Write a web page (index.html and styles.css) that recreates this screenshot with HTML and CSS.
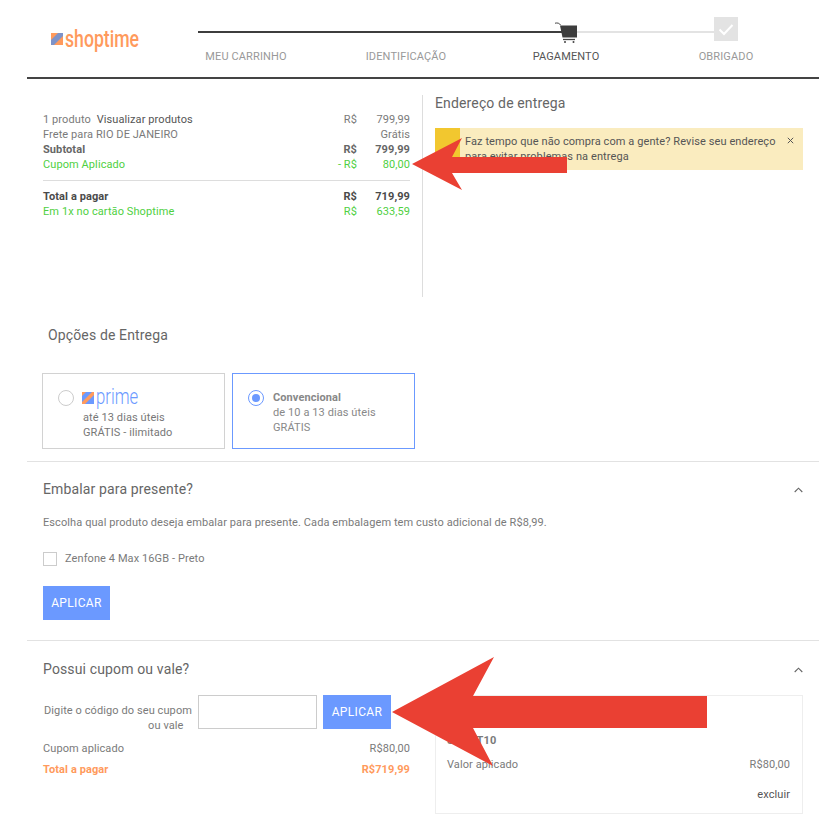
FILE: index.html
```html
<!DOCTYPE html>
<html lang="pt-BR">
<head>
<meta charset="utf-8">
<title>Shoptime - Pagamento</title>
<link rel="stylesheet" href="styles.css">
</head>
<body>
<div class="page">
  <header class="header">
    <div class="logo">
      <svg class="mark" viewBox="0 0 12 12" width="12" height="12"><rect width="12" height="12" fill="#ff9a5c"/><path d="M0 12V7L7 0h5v3L3 12z" fill="#7d93c9"/></svg>
      <span class="logo-text">shoptime</span>
    </div>
    <div class="stepper">
      <div class="track"><span class="track-done"></span><span class="track-todo"></span></div>
      <svg class="cart" viewBox="0 0 24 21" width="24" height="21"><path d="M1 1.2c2.500-.6 4.500 0 5.500 1.800" fill="none" stroke="#444" stroke-width="1"/><path d="M6 3.500h17v12H8.500z" fill="#3d3d3d"/><path d="M9 17.500h12" stroke="#444" stroke-width="1.300"/><circle cx="11" cy="20" r="1" fill="#444"/><circle cx="19.500" cy="20" r="1" fill="#444"/></svg>
      <div class="check"><svg viewBox="0 0 24 24" width="24" height="24"><path d="M5.500 12.500 10 17l8.500-9" fill="none" stroke="#fff" stroke-width="2"/></svg></div>
      <ol class="steps">
        <li>MEU CARRINHO</li>
        <li>IDENTIFICAÇÃO</li>
        <li class="current">PAGAMENTO</li>
        <li>OBRIGADO</li>
      </ol>
    </div>
  </header>

  <div class="summary-row">
    <section class="summary">
      <div class="line"><span class="label">1 produto <a class="view">Visualizar produtos</a></span><span class="cur">R$</span><span class="val">799,99</span></div>
      <div class="line"><span class="label">Frete para RIO DE JANEIRO</span><span class="val">Grátis</span></div>
      <div class="line strong"><span class="label">Subtotal</span><span class="cur">R$</span><span class="val">799,99</span></div>
      <div class="line green"><span class="label">Cupom Aplicado</span><span class="cur">- R$</span><span class="val">80,00</span></div>
      <hr class="rule">
      <div class="line strong dark"><span class="label">Total a pagar</span><span class="cur">R$</span><span class="val">719,99</span></div>
      <div class="line green"><span class="label">Em 1x no cartão Shoptime</span><span class="cur">R$</span><span class="val">633,59</span></div>
    </section>
    <section class="address">
      <h2 class="title">Endereço de entrega</h2>
      <div class="alert">
        <span class="alert-flag"></span>
        <p class="alert-text">Faz tempo que não compra com a gente? Revise seu endereço para evitar problemas na entrega</p>
        <svg class="alert-close" viewBox="0 0 7 7" width="7" height="7"><path d="M.8.800l5.400 5.400M6.200.800.800 6.200" stroke="#555" stroke-width="1"/></svg>
      </div>
    </section>
  </div>

  <section class="delivery">
    <h2 class="title delivery-title">Opções de Entrega</h2>
    <div class="cards">
      <div class="card">
        <span class="radio"></span>
        <div class="card-body prime-body">
          <div class="prime">
            <svg class="mark" viewBox="0 0 12 12" width="12" height="12"><rect width="12" height="12" fill="#6b99ff"/><path d="M0 0h4L0 4zM0 12v-2L10 0h2v3L3 12z" fill="#ff9a5c"/></svg>
            <span class="prime-text">prime</span>
          </div>
          <div>até 13 dias úteis</div>
          <div>GRÁTIS - ilimitado</div>
        </div>
      </div>
      <div class="card selected">
        <span class="radio on"></span>
        <div class="card-body">
          <div class="card-name">Convencional</div>
          <div>de 10 a 13 dias úteis</div>
          <div>GRÁTIS</div>
        </div>
      </div>
    </div>
  </section>

  <section class="panel gift">
    <div class="panel-head">
      <h2 class="title">Embalar para presente?</h2>
      <svg class="chevron" viewBox="0 0 9 6" width="9" height="6"><path d="M.7 5 4.500 1.200 8.300 5" fill="none" stroke="#666" stroke-width="1.100"/></svg>
    </div>
    <p class="gift-note">Escolha qual produto deseja embalar para presente. Cada embalagem tem custo adicional de R$8,99.</p>
    <label class="gift-item"><span class="checkbox"></span>Zenfone 4 Max 16GB - Preto</label>
    <button class="btn" type="button">APLICAR</button>
  </section>

  <section class="panel coupon">
    <div class="panel-head">
      <h2 class="title">Possui cupom ou vale?</h2>
      <svg class="chevron" viewBox="0 0 9 6" width="9" height="6"><path d="M.7 5 4.500 1.200 8.300 5" fill="none" stroke="#666" stroke-width="1.100"/></svg>
    </div>
    <div class="coupon-body">
      <div class="coupon-left">
        <div class="coupon-form">
          <label class="coupon-label">Digite o código do seu cupom<br>ou vale&nbsp;&nbsp;&nbsp;</label>
          <span class="coupon-input"></span>
          <button class="btn" type="button">APLICAR</button>
        </div>
        <div class="coupon-line"><span>Cupom aplicado</span><span>R$80,00</span></div>
        <div class="coupon-line total"><span>Total a pagar</span><span>R$719,99</span></div>
      </div>
      <div class="coupon-box">
        <div class="coupon-code">SHOPT10</div>
        <div class="coupon-line box-line"><span>Valor aplicado</span><span>R$80,00</span></div>
        <a class="remove">excluir</a>
      </div>
    </div>
  </section>
</div>

<svg class="arrow arrow-top" viewBox="0 0 156 52" width="156" height="52"><path d="M0 26 50 0 40 19H155V35H40L50 52z" fill="#ea4033"/></svg>
<svg class="arrow arrow-bottom" viewBox="0 0 316 110" width="316" height="110"><path d="M0 55 102 0 81 39H315V71H81L101 109z" fill="#ea4033"/></svg>
</body>
</html>
```

FILE: styles.css
```css
* { box-sizing: border-box; }
html, body { margin: 0; padding: 0; background: #fff; }
body {
  position: relative;
  height: 834px;
  overflow: hidden;
  font-family: Roboto, "Liberation Sans", sans-serif;
  font-size: 11px;
  line-height: 15px;
  letter-spacing: .09px;
  color: #7a7a7a;
}
.page { width: 792px; margin-left: 27px; }
.title { margin: 0; font-size: 14px; line-height: 17px; font-weight: 400; letter-spacing: .14px; color: #666; }

/* header */
.header { display: flex; height: 79px; border-bottom: 2px solid #444; }
.logo { width: 139px; padding: 28px 0 0 24px; display: flex; align-items: flex-start; }
.logo .mark { margin-top: 5px; flex: none; }
.logo-text {
  display: block;
  margin-left: 2px;
  font-size: 24px;
  line-height: 22px;
  font-weight: 500;
  letter-spacing: 0;
  color: #ff9a5c;
  transform: scaleX(.735);
  transform-origin: left top;
}
.stepper { position: relative; width: 640px; padding-top: 31px; }
.track { display: flex; margin-left: 32px; width: 540px; height: 2px; }
.track-done { width: 374px; background: #3d3d3d; }
.track-todo { flex: 1; background: #e3e3e3; }
.cart { position: absolute; left: 388px; top: 22px; }
.check { position: absolute; left: 548px; top: 17px; width: 24px; height: 24px; background: #e3e3e3; }
.check svg { display: block; }
.steps { display: flex; margin: 17px 0 0; padding: 0; list-style: none; color: #999; line-height: 14px; letter-spacing: .13px; }
.steps li { width: 160px; text-align: center; }
.steps .current { color: #555; }

/* summary */
.summary-row { display: flex; height: 202px; margin-top: 16px; }
.summary { width: 396px; padding: 17px 12px 0 16px; border-right: 1px solid #ddd; }
.line { display: flex; }
.label { flex: 1; }
.cur { text-align: right; }
.val { width: 53px; text-align: right; }
.view { color: #555; margin-left: 3px; }
.strong { font-weight: 700; color: #666; }
.strong.dark { color: #4a4a4a; }
.green { color: #4fd03f; }
.rule { height: 1px; margin: 8px 0 8px; border: 0; background: #ddd; }
.address { flex: 1; padding: 0 16px 0 12px; }
.alert { display: flex; height: 42px; margin-top: 16px; background: #faecbf; color: #555; }
.alert-flag { width: 25px; background: #f2c72f; flex: none; }
.alert-text { width: 320px; margin: 6px 0 0 5px; }
.alert-close { margin: 9px 0 0 2px; }

/* delivery */
.delivery { padding-left: 21px; margin-top: 30px; }
.delivery-title { margin-bottom: 29px; }
.cards { display: flex; gap: 7px; margin-left: -6px; }
.card { display: flex; width: 183px; height: 76px; border: 1px solid #d2d2d2; color: #888; }
.card.selected { border-color: #6b99ff; }
.radio { flex: none; width: 16px; height: 16px; margin: 16px 0 0 15px; border: 1px solid #ccc; border-radius: 50%; }
.radio.on { position: relative; border-color: #6b99ff; }
.radio.on::after { content: ""; position: absolute; left: 3px; top: 3px; width: 8px; height: 8px; border-radius: 50%; background: #6b99ff; }
.card-body { margin-left: 9px; padding-top: 16px; }
.card-name { font-weight: 700; }
.prime-body { padding-top: 14px; color: #777; }
.prime { display: flex; align-items: flex-start; height: 22px; margin-left: -1px; }
.prime .mark { margin-top: 4px; flex: none; }
.prime-text {
  display: block;
  margin-left: 1.5px;
  font-size: 22px;
  line-height: 18px;
  font-weight: 300;
  letter-spacing: 0;
  color: #6b99ff;
  transform: scaleX(.76);
  transform-origin: left top;
}

/* panels */
.panel { border-top: 1px solid #e2e2e2; padding: 19px 16px 0; }
.gift { height: 179px; margin-top: 12px; }
.panel-head { display: flex; justify-content: space-between; align-items: center; }
.gift-note { margin: 17px 0 0; }
.gift-item { display: flex; align-items: center; gap: 8px; margin-top: 21px; }
.checkbox { width: 14px; height: 14px; border: 1px solid #ccc; }
.btn {
  display: block;
  width: 67px;
  height: 34px;
  padding: 0;
  border: 0;
  background: #6b99ff;
  color: #fff;
  font: 400 12px/34px Roboto, "Liberation Sans", sans-serif;
  letter-spacing: .35px;
}
.gift .btn { margin-top: 20px; }
.coupon { padding-top: 20px; }
.coupon .btn { width: 68px; }
.coupon-body { display: flex; margin-top: 17px; }
.coupon-left { width: 367px; }
.coupon-form { display: flex; gap: 6px; }
.coupon-label { width: 149px; padding-top: 8px; text-align: right; white-space: nowrap; }
.coupon-input { width: 119px; height: 34px; border: 1px solid #ccc; }
.coupon-line { display: flex; justify-content: space-between; }
.coupon-left .coupon-line { margin-top: 8px; }
.coupon-left .total { margin-top: 6px; font-weight: 700; color: #ff9a5c; }
.coupon-box { width: 368px; height: 119px; margin-left: 25px; padding: 37px 12px 0 11px; border: 1px solid #eee; }
.coupon-code { font-weight: 700; }
.box-line { margin-top: 9px; }
.remove { display: block; margin-top: 15px; text-align: right; color: #555; }

/* annotation arrows over the screenshot */
.arrow { position: absolute; display: block; }
.arrow-top { left: 412px; top: 138px; }
.arrow-bottom { left: 392px; top: 657px; }
```
